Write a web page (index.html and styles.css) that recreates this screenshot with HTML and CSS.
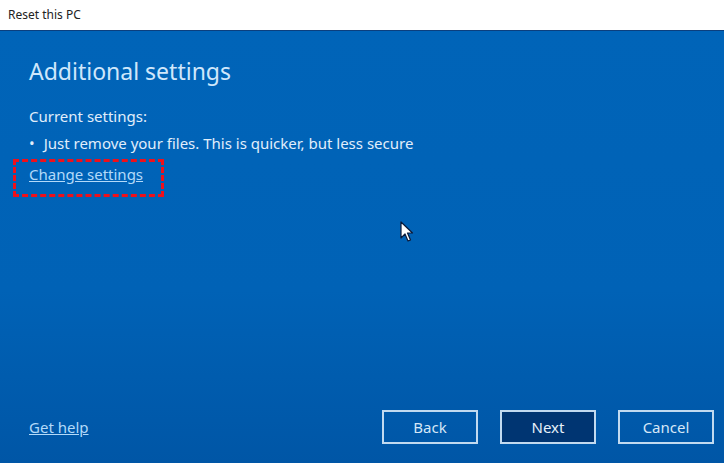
FILE: index.html
```html
<!DOCTYPE html>
<html lang="en">
<head>
    <meta charset="UTF-8">
    <title>Reset this PC</title>
    <link rel="stylesheet" href="styles.css">
</head>
<body>
    <div class="window">
        <div class="titlebar">Reset this PC</div>
        <div class="content">
            <h1>Additional settings</h1>
            <p class="label">Current settings:</p>
            <ul class="current">
                <li>Just remove your files. This is quicker, but less secure</li>
            </ul>
            <div class="highlight">
                <a href="#" class="link">Change settings</a>
            </div>
            <div class="spacer"></div>
            <div class="footer">
                <a href="#" class="link help">Get help</a>
                <div class="buttons">
                    <button class="btn">Back</button>
                    <button class="btn primary">Next</button>
                    <button class="btn">Cancel</button>
                </div>
            </div>
        </div>
        <svg class="cursor" width="14" height="22" viewBox="0 0 14 22">
            <path d="M1 1 L1 17 L5 13 L8 20 L10.5 19 L7.5 12 L12.5 12 Z" fill="#fff" stroke="#0a1a3a" stroke-width="1.2" stroke-linejoin="round"/>
        </svg>
    </div>
</body>
</html>
```

FILE: styles.css
```css
html, body {
    margin: 0;
    padding: 0;
}
body {
    font-family: 'Noto Sans', 'Open Sans', sans-serif;
    width: 724px;
    height: 463px;
    overflow: hidden;
}
.window {
    position: relative;
    display: flex;
    flex-direction: column;
    height: 463px;
}
.titlebar {
    height: 31px;
    line-height: 29px;
    padding-left: 8px;
    font-size: 12px;
    color: #222;
    background: #fff;
    border-bottom: 1px solid #0b3f7e;
    box-sizing: border-box;
}
.content {
    flex: 1;
    display: flex;
    flex-direction: column;
    padding: 22px 10px 19px 29px;
    background: linear-gradient(180deg, #0064b8 0%, #0062b6 60%, #0056a6 100%);
    color: #e1eefb;
}
h1 {
    margin: 0;
    font-size: 23px;
    font-weight: 400;
    line-height: 36px;
    color: #cfe7fb;
}
.label {
    margin: 17px 0 0;
    font-size: 15px;
    line-height: 20px;
}
.current {
    margin: 7px 0 0;
    padding: 0;
    list-style: none;
    font-size: 15px;
    line-height: 20px;
}
.current li::before {
    content: "•";
    margin-right: 9px;
}
.highlight {
    box-sizing: border-box;
    margin: 6px 0 0 -16px;
    width: 151px;
    height: 38px;
    padding: 1px 0 0 13px;
    border: 3px dashed #f0101a;
}
.link {
    color: #b3daf9;
    font-size: 15px;
    line-height: 20px;
}
.spacer {
    flex: 1;
}
.footer {
    display: flex;
    align-items: center;
    justify-content: space-between;
}
.buttons {
    display: flex;
    gap: 22px;
}
.btn {
    width: 96px;
    height: 34px;
    font-family: inherit;
    font-size: 15px;
    color: #d6e7f7;
    background: transparent;
    border: 2px solid #c2daf0;
    padding: 0;
}
.btn.primary {
    background: #003572;
    color: #e6f0fa;
}
.cursor {
    position: absolute;
    left: 400px;
    top: 221px;
}
```
